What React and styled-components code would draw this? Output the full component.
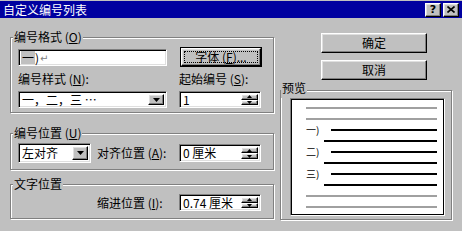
import styled, { createGlobalStyle } from 'styled-components';

const GlobalStyle = createGlobalStyle`
  html, body {
    margin: 0;
    padding: 0;
    background: #c0c0c0;
  }
  body {
    font-family: "Noto Sans CJK SC", "DejaVu Sans", sans-serif;
    font-size: 12px;
    color: #000;
  }
  * {
    box-sizing: border-box;
  }
`;

const Dialog = styled.div`
  width: 462px;
  height: 231px;
  padding-top: 1px;
  background: #c0c0c0;
  overflow: hidden;
`;

const TitleBar = styled.div`
  height: 17px;
  display: flex;
  align-items: center;
  justify-content: space-between;
  padding: 0 3px;
  background: #0000a0;
  color: #fff;
  line-height: 12px;
`;

const CaptionButtons = styled.div`
  display: flex;
  gap: 2px;
`;

const raised = `
  background: #c0c0c0;
  border: 1px solid;
  border-color: #fff #000 #000 #fff;
  box-shadow: inset -1px -1px 0 #808080, inset 1px 1px 0 #dfdfdf;
`;

const sunken = `
  background: #fff;
  border: 1px solid;
  border-color: #808080 #fff #fff #808080;
  box-shadow: inset 1px 1px 0 #000, inset -1px -1px 0 #dfdfdf;
`;

const CaptionButton = styled.div`
  ${raised}
  width: 16px;
  height: 14px;
  display: flex;
  align-items: center;
  justify-content: center;
  color: #000;
  font-family: "DejaVu Sans", sans-serif;
  font-weight: bold;
  font-size: 11px;
  line-height: 11px;
`;

const Body = styled.div`
  display: flex;
  gap: 6px;
  padding-left: 10px;
`;

const LeftColumn = styled.div`
  width: 264px;
  display: flex;
  flex-direction: column;
  padding-top: 13px;
`;

const RightColumn = styled.div`
  width: 172px;
  display: flex;
  flex-direction: column;
  padding-top: 15px;
`;

const Group = styled.fieldset`
  margin: ${(p) => p.$mt || 0}px 0 0;
  padding: 0;
  min-width: 0;
  border: 1px solid #808080;
  box-shadow: inset 1px 1px 0 #fff, 1px 1px 0 #fff;
`;

const Legend = styled.legend`
  margin-left: ${(p) => p.$ml}px;
  padding: 0 1px ${(p) => p.$pb || 0}px;
  line-height: 12px;
  background: #c0c0c0;
  white-space: nowrap;
`;

const FormatGrid = styled.div`
  display: grid;
  grid-template-columns: 149px 83px;
  grid-template-rows: 20px 12px 17px;
  column-gap: 12px;
  row-gap: 6px;
  padding: 4px 0 4px 7px;
`;

const PositionRow = styled.div`
  display: grid;
  grid-template-columns: 73px 76px 82px;
  column-gap: 6px;
  align-items: center;
  height: ${(p) => p.$h}px;
  margin: 4px 0 ${(p) => p.$pb}px 7px;
`;

const Label = styled.span`
  line-height: 12px;
  white-space: nowrap;
  grid-column: ${(p) => p.$col || 'auto'};
`;

const Edit = styled.div`
  ${sunken}
  height: 17px;
  align-self: center;
  display: flex;
  align-items: center;
  padding-left: 2px;
  line-height: 13px;
`;

const Field = styled.span`
  background: #c0c0c0;
  padding: 0 1px;
`;

const ParaMark = styled.span`
  color: #808080;
  font-size: 10px;
  margin-left: 1px;
`;

const Button = styled.div`
  ${raised}
  width: ${(p) => p.$w}px;
  height: 20px;
  display: flex;
  align-items: center;
  justify-content: center;
  line-height: 12px;
  white-space: nowrap;
`;

const DefaultButton = styled.div`
  width: 82px;
  height: 20px;
  justify-self: end;
  border: 1px solid #000;
  display: flex;
`;

const DefaultInner = styled.div`
  ${raised}
  flex: 1;
  display: flex;
  align-items: center;
  justify-content: center;
  padding: 2px;
`;

const Focus = styled.div`
  flex: 1;
  align-self: stretch;
  border: 1px dotted #000;
  display: flex;
  align-items: center;
  justify-content: center;
  line-height: 12px;
  white-space: nowrap;
`;

const Combo = styled.div`
  ${sunken}
  height: ${(p) => p.$h}px;
  display: flex;
  align-items: stretch;
  padding: 2px;
`;

const ComboText = styled.span`
  flex: 1;
  display: flex;
  align-items: center;
  padding-left: 1px;
  line-height: 12px;
  white-space: nowrap;
`;

const ArrowButton = styled.div`
  ${raised}
  width: 16px;
  display: flex;
  align-items: center;
  justify-content: center;
`;

const Spin = styled.div`
  ${sunken}
  width: 82px;
  height: ${(p) => p.$h}px;
  display: flex;
  padding: 2px;
`;

const SpinButtons = styled.div`
  width: 17px;
  display: flex;
  flex-direction: column;
`;

const SpinButton = styled.div`
  ${raised}
  flex: 1;
  display: flex;
  align-items: center;
  justify-content: center;
`;

const ButtonStack = styled.div`
  display: flex;
  flex-direction: column;
  gap: 7px;
  padding-left: 41px;
`;

const PreviewBody = styled.div`
  padding: 0 5px 3px 9px;
`;

const PreviewBox = styled.div`
  width: 155px;
  height: 118px;
  background: #fff;
  border: 1px solid;
  border-color: #808080 #fff #fff #808080;
  box-shadow: inset 1px 1px 0 #000, inset -1px -1px 0 #000;
  padding: 3px 7px 0 15px;
`;

const PreviewRow = styled.div`
  height: 11px;
  display: flex;
  align-items: center;
  padding-left: ${(p) => p.$indent}px;
`;

const PreviewNum = styled.span`
  width: 25px;
  font-size: 10px;
  line-height: 10px;
`;

const PreviewLine = styled.div`
  flex: 1;
  height: 2px;
  background: ${(p) => (p.$gray ? '#a0a0a0' : '#000')};
`;

const Down = () => (
  <svg width="7" height="4" viewBox="0 0 7 4">
    <polygon points="0,0 7,0 3.5,4" fill="#000" />
  </svg>
);

const Tri = ({ up }) => (
  <svg width="5" height="3" viewBox="0 0 5 3">
    <polygon points={up ? '2.5,0 5,3 0,3' : '0,0 5,0 2.5,3'} fill="#000" />
  </svg>
);

const Close = () => (
  <svg width="8" height="7" viewBox="0 0 8 7">
    <path d="M0.5 0.5 L7.5 6.5 M7.5 0.5 L0.5 6.5" stroke="#000" strokeWidth="1.6" />
  </svg>
);

const SpinBox = ({ value, h = 17 }) => (
  <Spin $h={h}>
    <ComboText>{value}</ComboText>
    <SpinButtons>
      <SpinButton><Tri up /></SpinButton>
      <SpinButton><Tri /></SpinButton>
    </SpinButtons>
  </Spin>
);

const ComboBox = ({ value, h = 17 }) => (
  <Combo $h={h}>
    <ComboText>{value}</ComboText>
    <ArrowButton><Down /></ArrowButton>
  </Combo>
);

const preview = [
  { kind: 'gray' },
  { kind: 'gray' },
  { kind: 'num', label: '一)' },
  { kind: 'cont' },
  { kind: 'num', label: '二)' },
  { kind: 'cont' },
  { kind: 'num', label: '三)' },
  { kind: 'cont' },
  { kind: 'gray' },
  { kind: 'gray' },
];

const App = () => (
  <Dialog>
    <GlobalStyle />
    <TitleBar>
      <span>自定义编号列表</span>
      <CaptionButtons>
        <CaptionButton>?</CaptionButton>
        <CaptionButton><Close /></CaptionButton>
      </CaptionButtons>
    </TitleBar>
    <Body>
      <LeftColumn>
        <Group>
          <Legend $ml={2}>编号格式 (<u>O</u>)</Legend>
          <FormatGrid>
            <Edit>
              <Field>一</Field>)<ParaMark>↵</ParaMark>
            </Edit>
            <DefaultButton>
              <DefaultInner>
                <Focus>字体 (<u>F</u>)...</Focus>
              </DefaultInner>
            </DefaultButton>
            <Label>编号样式 (<u>N</u>):</Label>
            <Label>起始编号 (<u>S</u>):</Label>
            <ComboBox value="一，二，三 …" />
            <SpinBox value="1" />
          </FormatGrid>
        </Group>
        <Group $mt={14}>
          <Legend $ml={2}>编号位置 (<u>U</u>)</Legend>
          <PositionRow $h={20} $pb={6}>
            <ComboBox value="左对齐" h={20} />
            <Label>对齐位置 (<u>A</u>):</Label>
            <SpinBox value="0 厘米" h={18} />
          </PositionRow>
        </Group>
        <Group $mt={8}>
          <Legend $ml={2}>文字位置</Legend>
          <PositionRow $h={17} $pb={7}>
            <Label $col={2}>缩进位置 (<u>I</u>):</Label>
            <SpinBox value="0.74 厘米" />
          </PositionRow>
        </Group>
      </LeftColumn>
      <RightColumn>
        <ButtonStack>
          <Button $w={106}>确定</Button>
          <Button $w={106}>取消</Button>
        </ButtonStack>
        <Group $mt={2}>
          <Legend $ml={0} $pb={4}>预览</Legend>
          <PreviewBody>
            <PreviewBox>
              {preview.map((row, i) => (
                <PreviewRow key={i} $indent={row.kind === 'cont' ? 18 : 0}>
                  {row.kind === 'num' && <PreviewNum>{row.label}</PreviewNum>}
                  <PreviewLine $gray={row.kind === 'gray'} />
                </PreviewRow>
              ))}
            </PreviewBox>
          </PreviewBody>
        </Group>
      </RightColumn>
    </Body>
  </Dialog>
);

export default App;
